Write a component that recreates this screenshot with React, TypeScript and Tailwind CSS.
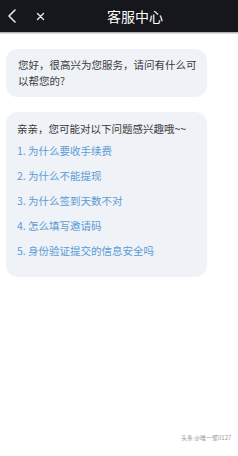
import React from "react";

const items = [
  "1. 为什么要收手续费",
  "2. 为什么不能提现",
  "3. 为什么签到天数不对",
  "4. 怎么填写邀请码",
  "5. 身份验证提交的信息安全吗",
];

export default function App() {
  return (
    <div
      className="relative w-[238px] h-[456px] bg-white overflow-hidden"
      style={{ fontFamily: '"Noto Sans CJK SC", "Noto Sans", sans-serif' }}
    >
      <div className="h-[32px] bg-[#16161d] flex items-center relative">
        <svg width="10" height="14" viewBox="0 0 10 14" className="ml-[7px]">
          <path d="M8 1 L2 7 L8 13" stroke="#e8e8e8" strokeWidth="1.6" fill="none" strokeLinecap="round" strokeLinejoin="round" />
        </svg>
        <svg width="9" height="9" viewBox="0 0 9 9" className="ml-[19px]">
          <path d="M1.5 1.5 L7.5 7.5 M7.5 1.5 L1.5 7.5" stroke="#e8e8e8" strokeWidth="1.4" strokeLinecap="round" />
        </svg>
        <div className="ml-[62px] text-[14px] leading-none text-white">客服中心</div>
      </div>
      <div className="h-[1px] bg-[#b5b5b5]" />
      <div className="h-[1px] bg-[#dcdcdc]" />

      <div className="pt-[15px] pl-[6px] flex flex-col gap-[15px]">
        <div className="w-[201px] bg-[#eff2f7] rounded-[12px] pl-[12px] pr-[10px] py-[8px] text-[10.5px] leading-[16px] text-[#3a3a3a]">
          您好，很高兴为您服务，请问有什么可以帮您的?
        </div>
        <div className="w-[201px] bg-[#eff2f7] rounded-[12px] pl-[11px] pr-[6px] pt-[8px] pb-[14px] text-[10.5px] text-[#3a3a3a]">
          <div className="leading-[18px] whitespace-nowrap">亲亲，您可能对以下问题感兴趣哦~~</div>
          {items.map((t) => (
            <div key={t} className="h-[25px] flex items-center text-[#5b9bd6] whitespace-nowrap">
              {t}
            </div>
          ))}
        </div>
      </div>

      <div className="absolute left-[181px] top-[433px] text-[6px] leading-[9px] text-[#9a9a9a] whitespace-nowrap">
        头条 @唯一聚0127
      </div>
    </div>
  );
}
